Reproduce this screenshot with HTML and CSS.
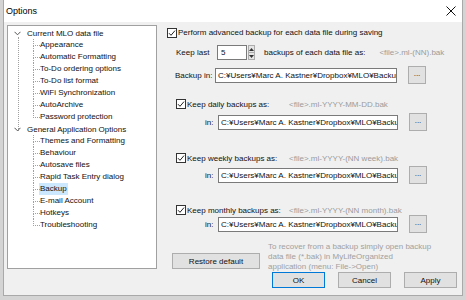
FILE: index.html
```html
<!DOCTYPE html>
<html>
<head>
<meta charset="utf-8">
<link rel="stylesheet" href="styles.css">
</head>
<body>
<div class="window">
  <div class="titlebar">
    <span class="title">Options</span>
    <svg class="close" width="10" height="10" viewBox="0 0 10 10"><path d="M0.5 0.5L9.5 9.5M9.5 0.5L0.5 9.5" stroke="#111" stroke-width="1"/></svg>
  </div>
  <div class="main">
    <div class="tree">
      <div class="root first">
        <div class="node"><svg class="chev" width="7" height="5" viewBox="0 0 7 5"><path d="M0.5 0.8L3.5 3.8L6.5 0.8" fill="none" stroke="#555" stroke-width="1"/></svg><span>Current MLO data file</span></div>
        <div class="children">
          <div class="item">Appearance</div>
          <div class="item">Automatic Formatting</div>
          <div class="item">To-Do ordering options</div>
          <div class="item">To-Do list format</div>
          <div class="item">WiFi Synchronization</div>
          <div class="item">AutoArchive</div>
          <div class="item last">Password protection</div>
        </div>
      </div>
      <div class="root">
        <div class="node"><svg class="chev" width="7" height="5" viewBox="0 0 7 5"><path d="M0.5 0.8L3.5 3.8L6.5 0.8" fill="none" stroke="#555" stroke-width="1"/></svg><span>General Application Options</span></div>
        <div class="children">
          <div class="item">Themes and Formatting</div>
          <div class="item">Behaviour</div>
          <div class="item">Autosave files</div>
          <div class="item">Rapid Task Entry dialog</div>
          <div class="item"><span class="sel">Backup</span></div>
          <div class="item">E-mail Account</div>
          <div class="item">Hotkeys</div>
          <div class="item last">Troubleshooting</div>
        </div>
      </div>
    </div>
    <div class="panel">
      <div class="row r-adv">
        <span class="cb"><svg width="10" height="10" viewBox="0 0 10 10"><rect x="0.5" y="0.5" width="9" height="9" fill="#fff" stroke="#333"/><path d="M2 5.2L4 7.3L8 2.6" fill="none" stroke="#222" stroke-width="1"/></svg></span>
        <span>Perform advanced backup for each data file during saving</span>
      </div>
      <div class="row r-keep">
        <span class="lbl-keep">Keep last</span>
        <span class="spin"><span class="spin-edit">5</span><span class="spin-btns"><span class="sb"><svg width="5" height="3" viewBox="0 0 5 3"><path d="M0 3L2.5 0L5 3Z" fill="#333"/></svg></span><span class="sb"><svg width="5" height="3" viewBox="0 0 5 3"><path d="M0 0L2.5 3L5 0Z" fill="#333"/></svg></span></span></span>
        <span class="lbl-backups">backups of each data file as:</span>
        <span class="hint hint-nn">&lt;file&gt;.ml-(NN).bak</span>
      </div>
      <div class="row r-in r-backupin">
        <span class="lbl-bin">Backup in:</span>
        <span class="edit edit-bin">C:¥Users¥Marc A. Kastner¥Dropbox¥MLO¥Backu</span>
        <span class="dots">...</span>
      </div>

      <div class="row r-cb r-daily">
        <span class="cb"><svg width="10" height="10" viewBox="0 0 10 10"><rect x="0.5" y="0.5" width="9" height="9" fill="#fff" stroke="#333"/><path d="M2 5.2L4 7.3L8 2.6" fill="none" stroke="#222" stroke-width="1"/></svg></span>
        <span class="cbl">Keep daily backups as:</span>
        <span class="hint">&lt;file&gt;.ml-YYYY-MM-DD.bak</span>
      </div>
      <div class="row r-in r-in1">
        <span class="lbl-in">in:</span>
        <span class="edit">C:¥Users¥Marc A. Kastner¥Dropbox¥MLO¥Backu</span>
        <span class="dots">...</span>
      </div>

      <div class="row r-cb r-weekly">
        <span class="cb"><svg width="10" height="10" viewBox="0 0 10 10"><rect x="0.5" y="0.5" width="9" height="9" fill="#fff" stroke="#333"/><path d="M2 5.2L4 7.3L8 2.6" fill="none" stroke="#222" stroke-width="1"/></svg></span>
        <span class="cbl">Keep weekly backups as:</span>
        <span class="hint">&lt;file&gt;.ml-YYYY-(NN week).bak</span>
      </div>
      <div class="row r-in r-in2">
        <span class="lbl-in">in:</span>
        <span class="edit">C:¥Users¥Marc A. Kastner¥Dropbox¥MLO¥Backu</span>
        <span class="dots">...</span>
      </div>

      <div class="row r-cb r-monthly">
        <span class="cb"><svg width="10" height="10" viewBox="0 0 10 10"><rect x="0.5" y="0.5" width="9" height="9" fill="#fff" stroke="#333"/><path d="M2 5.2L4 7.3L8 2.6" fill="none" stroke="#222" stroke-width="1"/></svg></span>
        <span class="cbl">Keep monthly backups as:</span>
        <span class="hint">&lt;file&gt;.ml-YYYY-(NN month).bak</span>
      </div>
      <div class="row r-in r-in3">
        <span class="lbl-in">in:</span>
        <span class="edit">C:¥Users¥Marc A. Kastner¥Dropbox¥MLO¥Backu</span>
        <span class="dots">...</span>
      </div>

      <div class="bottom">
        <span class="btn restore">Restore default</span>
        <div class="note">To recover from a backup simply open backup<br>data file (*.bak) in MyLifeOrganized<br>application (menu: File-&gt;Open)</div>
      </div>
    </div>
  </div>
  <div class="footer">
    <span class="btn dlg ok">OK</span>
    <span class="btn dlg">Cancel</span>
    <span class="btn dlg">Apply</span>
  </div>
</div>
</body>
</html>
```
FILE: styles.css
```css
* { box-sizing: border-box; }
html, body { margin: 0; padding: 0; }
body {
  width: 466px; height: 300px; overflow: hidden;
  background: #d4d4d4;
  font-family: "Liberation Sans", Arial, sans-serif;
  font-size: 8px;
  color: #111;
}
.window {
  margin-left: 3px;
  width: 460px;
  height: 296px;
  background: #f0f0f0;
  border: 1px solid #a9a9a9;
  border-top: none;
  display: flex;
  flex-direction: column;
}
.titlebar {
  height: 22px;
  background: #fff;
  display: flex;
  align-items: center;
  justify-content: space-between;
  padding: 0 6px 0 2px;
  flex: none;
}
.title { font-size: 9px; color: #000; }

.main { display: flex; padding-top: 3px; height: 250px; flex: none; }

.tree {
  margin-left: 3px;
  width: 150px;
  height: 244px;
  background: #fff;
  border: 1px solid #a0a0a0;
  padding-top: 1px;
  flex: none;
}
.root { position: relative; }
.node { height: 12px; display: flex; align-items: center; padding-left: 6px; }
.chev { margin-right: 6px; flex: none; }
.root.first::before {
  content: ""; position: absolute; left: 10px; top: 10px; bottom: -8px;
  border-left: 1px dotted #a0a0a0;
}
.children { margin-left: 25px; }
.item { height: 12px; line-height: 12px; position: relative; padding-left: 7px; white-space: nowrap; }
.item::before {
  content: ""; position: absolute; left: 0; top: 0; height: 6px; width: 6px;
  border-left: 1px dotted #a0a0a0; border-bottom: 1px dotted #a0a0a0;
}
.item::after {
  content: ""; position: absolute; left: 0; top: 6px; height: 6px;
  border-left: 1px dotted #a0a0a0;
}
.item.last::after { display: none; }
.sel { background: #cce8ff; padding: 0 1px; margin-left: -1px; display: inline-block; height: 12px; }

.panel { margin-left: 10px; display: flex; flex-direction: column; width: 292px; }
.row { display: flex; align-items: center; white-space: nowrap; }
.cb { display: inline-flex; width: 10px; height: 10px; margin-right: 1px; flex: none; }
.cb svg { display: block; }

.r-adv { height: 16px; }
.r-keep { height: 15px; margin-top: 5px; }
.lbl-keep { margin-left: 9px; width: 41px; }
.spin { display: flex; height: 15px; }
.spin-edit { width: 30px; height: 15px; background: #fff; border: 1px solid #7a7a7a; padding-left: 3px; line-height: 13px; }
.spin-btns { display: flex; flex-direction: column; width: 7px; margin-left: 1px; }
.sb { flex: 1; background: #e5e5e5; border: 1px solid #acacac; display: flex; align-items: center; justify-content: center; }
.sb + .sb { border-top: none; }
.lbl-backups { margin-left: 9px; }
.hint { color: #9b9b9b; }
.hint-nn { margin-left: 14px; }

.r-in { height: 18px; }
.r-backupin { margin-top: 6px; }
.lbl-bin { margin-left: 8px; width: 40px; }
.edit {
  width: 180px; height: 15px; background: #fff; border: 1px solid #7a7a7a;
  padding-left: 2px; line-height: 13px; overflow: hidden;
}
.edit-bin { width: 182px; }
.dots {
  margin-left: 11px; width: 18px; height: 18px; background: #e1e1e1; border: 1px solid #adadad;
  display: flex; align-items: center; justify-content: center; padding-bottom: 3px; color: #222;
}

.r-cb { height: 10px; padding-left: 9px; }
.cbl { width: 102px; }
.r-daily { margin-top: 15px; }
.r-in1 { margin-top: 4px; }
.r-weekly { margin-top: 22px; }
.r-in2 { margin-top: 3px; }
.r-monthly { margin-top: 21px; }
.r-in3 { margin-top: 0; }
.lbl-in { margin-left: 38px; width: 13px; }

.bottom { display: flex; align-items: flex-start; margin-top: 9px; }
.btn {
  background: #e1e1e1; border: 1px solid #adadad; display: flex; align-items: center; justify-content: center;
  color: #111;
}
.restore { margin-left: 5px; margin-top: 11px; width: 88px; height: 16px; }
.note { margin-left: 8px; color: #a0a0a0; line-height: 10px; white-space: nowrap; }

.footer { display: flex; justify-content: flex-end; gap: 13px; padding-right: 5px; }
.dlg { width: 53px; height: 16px; }
.ok { border-color: #0078d7; }
```
